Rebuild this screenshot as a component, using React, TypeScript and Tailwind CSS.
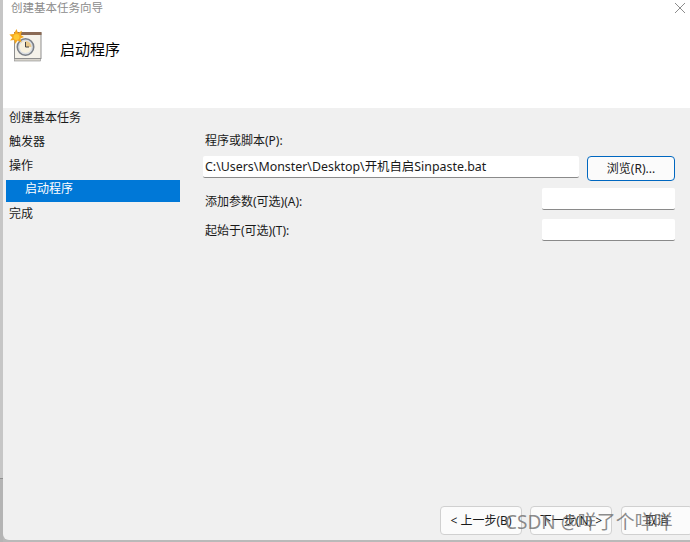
import React from "react";

const font = "font-['Noto_Sans','Noto_Sans_CJK_SC',sans-serif]";

const TaskIcon = () => (
  <svg width="34" height="34" viewBox="0 0 34 34" className="shrink-0">
    <rect x="5.5" y="29" width="26" height="3" fill="#d8d4cc" stroke="#8a8a8a" strokeWidth="0.6" />
    <rect x="5.5" y="4" width="26.5" height="25.5" fill="#f5f2ea" stroke="#8f8f8f" />
    <rect x="5" y="3" width="27.5" height="3" fill="#8a6a55" />
    <circle cx="16.5" cy="18" r="8.2" fill="#d9dde2" stroke="#7b8088" strokeWidth="1.6" />
    <circle cx="16.5" cy="18" r="6" fill="#f7f1df" />
    <path d="M16.5 12 A6 6 0 0 1 22.5 18 L16.5 18 Z" fill="#e9c98c" />
    <path d="M16.5 13 V18 H20" fill="none" stroke="#444" strokeWidth="1" />
    <path
      d="M7.5 0 L9 4 L13 1.8 L11.8 6 L15 8 L11.4 9.6 L12.6 13.6 L8.6 11.6 L6 15 L5.2 11 L1 11.6 L3.4 8.4 L0.4 5.6 L4.8 5 Z"
      fill="#f5a81e"
    />
    <circle cx="7.5" cy="8" r="3" fill="#ffc933" />
  </svg>
);

const NavItem = ({ label, className }: { label: string; className?: string }) => (
  <div className={`h-[24px] pl-[6px] text-[12px] leading-[20px] text-[#1a1a1a] ${className ?? ""}`}>{label}</div>
);

const TextBox = ({ value, className }: { value?: string; className: string }) => (
  <div className={`h-[22px] bg-white border-b border-[#8a8a8a] rounded-[2px] pl-[2px] text-[12.4px] leading-[21px] whitespace-nowrap text-[#1a1a1a] ${className}`}>
    {value}
  </div>
);

const FooterButton = ({ label, className }: { label: string; className: string }) => (
  <div className={`h-[29px] bg-[#fbfbfb] border border-[#d0d0d0] rounded-[4px] text-center text-[12px] leading-[28px] whitespace-nowrap text-[#1a1a1a] ${className}`}>
    {label}
  </div>
);

export default function App() {
  return (
    <div className={`relative flex w-[690px] h-[542px] overflow-hidden bg-[#b9b9b9] ${font}`}>
      <div className="flex flex-col w-[3px] shrink-0 bg-[#b4b4b4]">
        <div className="h-[479px] bg-[#c6c6c6] border-b border-[#8f8f8f]" />
      </div>
      <div className="flex flex-col flex-1 min-w-0 h-[540px] rounded-bl-[6px] overflow-hidden">
        <div className="h-[108px] shrink-0 bg-white">
          <div className="flex justify-between h-[16px] pl-[8px] pr-[4px]">
            <span className="text-[11.5px] leading-[16px] text-[#8c8c8c]">创建基本任务向导</span>
            <svg width="12" height="12" viewBox="0 0 12 12" className="mt-[2px]">
              <path d="M1 1 L11 11 M11 1 L1 11" stroke="#8c8c8c" strokeWidth="1" />
            </svg>
          </div>
          <div className="flex items-start pl-[6px] pt-[13px]">
            <TaskIcon />
            <span className="ml-[17px] mt-[8px] text-[15px] leading-[24px] text-black">启动程序</span>
          </div>
        </div>
        <div className="flex flex-1 bg-[#f0f0f0]">
          <div className="w-[177px] shrink-0">
            <NavItem label="创建基本任务" />
            <NavItem label="触发器" />
            <NavItem label="操作" />
            <div className="ml-[3px] h-[22px] bg-[#0078d7] pl-[19px] text-[12px] leading-[18px] text-white">启动程序</div>
            <NavItem label="完成" className="mt-[2px]" />
          </div>
          <div className="flex-1 min-w-0 flex flex-col pr-[15px]">
            <div className="pl-[25px] pt-[24px] text-[12px] leading-[17px] text-[#1a1a1a]">程序或脚本(P):</div>
            <div className="flex items-start mt-[7px] pl-[23px]">
              <TextBox value="C:\Users\Monster\Desktop\开机自启Sinpaste.bat" className="w-[376px]" />
              <div className="ml-[8px] h-[25px] w-[88px] bg-[#fbfbfb] border border-[#0067c0] rounded-[4px] text-center text-[12px] leading-[24px] text-[#1a1a1a]">
                浏览(R)...
              </div>
            </div>
            <div className="flex items-start justify-between mt-[7px] pl-[25px]">
              <span className="pt-[5px] text-[12px] leading-[18px] text-[#1a1a1a]">添加参数(可选)(A):</span>
              <TextBox className="w-[133px]" />
            </div>
            <div className="flex items-start justify-between mt-[8px] pl-[25px]">
              <span className="pt-[3px] text-[12px] leading-[18px] text-[#1a1a1a]">起始于(可选)(T):</span>
              <TextBox className="w-[133px]" />
            </div>
            <div className="flex justify-start mt-auto mb-[5px] pl-[260px] -mr-[15px]">
              <FooterButton label="< 上一步(B)" className="w-[82px] shrink-0" />
              <FooterButton label="下一步(N) >" className="ml-[8px] w-[82px] shrink-0" />
              <FooterButton label="取消" className="ml-[9px] w-[72px] shrink-0" />
            </div>
          </div>
        </div>
      </div>
      <span className="absolute left-[505px] top-[510px] text-[19px] leading-[24px] text-[#6e6e6e]/80 whitespace-nowrap">
        CSDN @咩了个咩咩
      </span>
    </div>
  );
}
